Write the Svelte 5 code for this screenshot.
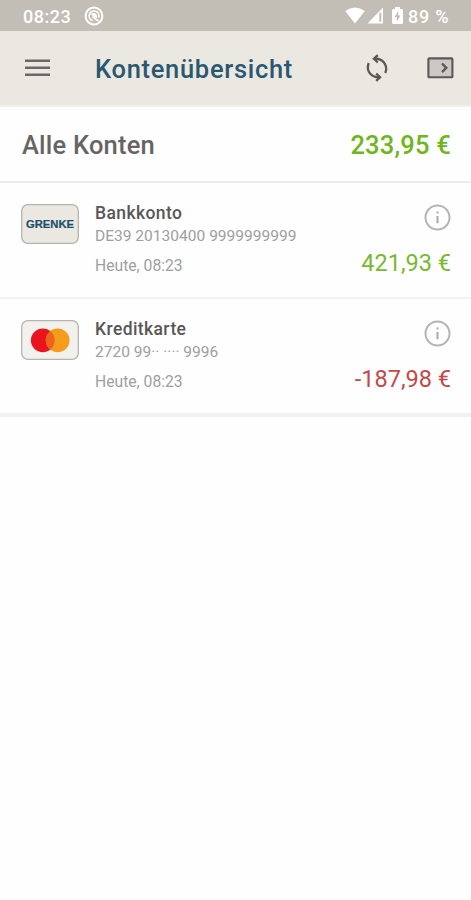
<script>
  const accounts = [
    { kind: 'bank', name: 'Bankkonto', number: 'DE39 20130400 9999999999', updated: 'Heute, 08:23', amount: '421,93 €', negative: false },
    { kind: 'card', name: 'Kreditkarte', number: '2720 99·· ···· 9996', updated: 'Heute, 08:23', amount: '-187,98 €', negative: true }
  ];
</script>

<div class="screen">
  <div class="status">
    <span class="clock">08:23</span>
    <svg class="notif" width="20" height="20" viewBox="0 0 20 20" fill="none" stroke="#fff">
      <circle cx="10" cy="10" r="8.4" stroke-width="2" />
      <path d="M8.500 14.600A4.900 4.900 0 1 1 14.700 11.500" stroke-width="1.700" />
      <path d="M6.800 8.400Q9.500 6 12 8q1.800 1.800 1 4.200z" fill="#fff" stroke="none" />
      <path d="M8.500 10.500l6 4.700" stroke-width="1.700" />
    </svg>
    <span class="grow"></span>
    <svg class="wifi" width="20" height="17" viewBox="0 0 20 17"><path d="M10 16.500L.2 4Q10-3 19.800 4z" fill="#fff" /></svg>
    <svg class="signal" width="17" height="17" viewBox="0 0 17 17">
      <path d="M.5 16.500L16 .5v16z" fill="#fff" />
      <path d="M12.300 6.700l2-2v10h-2z" fill="#c2beb5" />
    </svg>
    <svg class="battery" width="11" height="17" viewBox="0 0 11 17">
      <path d="M3 0h5v2h1.500Q11 2 11 3.500v12Q11 17 9.500 17h-8Q0 17 0 15.500v-12Q0 2 1.500 2H3z" fill="#fff" />
      <path d="M6.300 4L2.600 10h2.200v4.500L8.500 8.500H6.300z" fill="#c2beb5" />
    </svg>
    <span class="percent">89 %</span>
  </div>

  <header>
    <svg class="menu" width="25" height="18" viewBox="0 0 25 18"><path d="M0 1.700h25M0 8.700h25M0 15.700h25" stroke="#6b6865" stroke-width="2.500" /></svg>
    <h1>Kontenübersicht</h1>
    <span class="grow"></span>
    <svg class="sync" width="30" height="30" viewBox="0 0 30 30" fill="none" stroke="#5a5957" stroke-width="2.300">
      <path d="M12.500 5.800C20 5.200 26.500 11.500 23.300 20M6.700 10C3.500 18.500 10 24.800 17.500 24.200" />
      <path d="M15.800 2.200l-3.900 3.600 3.900 3.700M14.200 20.500l3.900 3.700-3.900 3.600" />
    </svg>
    <svg class="panel" width="27" height="22" viewBox="0 0 27 22">
      <rect x="1.400" y="1.400" width="24" height="18.800" rx=".8" fill="#ccc9c5" stroke="#5a5957" stroke-width="2.100" />
      <path d="M15 6.500l4.300 4.300-4.300 4.300" fill="none" stroke="#5a5957" stroke-width="2.400" />
    </svg>
  </header>

  <section class="total">
    <span class="all">Alle Konten</span>
    <span class="sum">233,95 €</span>
  </section>

  {#each accounts as account}
    <section class="account">
      <div class="logo">
        {#if account.kind === 'bank'}
          <svg width="58" height="40" viewBox="0 0 58 40">
            <rect x=".7" y=".7" width="56.600" height="38.600" rx="6" fill="#ebe8e2" stroke="#b5b4b0" stroke-width="1.300" />
            <text x="5" y="24" textLength="48" lengthAdjust="spacingAndGlyphs" class="brand">GRENKE</text>
          </svg>
        {:else}
          <svg width="58" height="40" viewBox="0 0 58 40">
            <rect x=".7" y=".7" width="56.600" height="38.600" rx="6" fill="#f2f1ee" stroke="#b5b4b0" stroke-width="1.300" />
            <circle cx="21.800" cy="20.300" r="11.900" fill="#e9141d" />
            <circle cx="36.700" cy="20.300" r="11.900" fill="#f69c1c" />
            <path d="M29.250 11.020a11.900 11.900 0 0 1 0 18.560a11.900 11.900 0 0 1 0-18.560z" fill="#ed651b" />
          </svg>
        {/if}
      </div>
      <div class="details">
        <div class="name">{account.name}</div>
        <div class="number">{account.number}</div>
        <div class="updated">{account.updated}</div>
      </div>
      <div class="side">
        <svg width="27" height="27" viewBox="0 0 27 27">
          <circle cx="13.500" cy="13.500" r="12" fill="none" stroke="#b5b4b3" stroke-width="2" />
          <path d="M12.500 7.500h2v2h-2zM12.500 12h2v7.300h-2z" fill="#aaa9a8" />
        </svg>
        <div class="amount" class:negative={account.negative}>{account.amount}</div>
      </div>
    </section>
  {/each}
</div>

<style>
  .screen {
    width: 471px;
    height: 900px;
    background: #fefefe;
    font-family: Roboto, "Liberation Sans", sans-serif;
    overflow: hidden;
    white-space: nowrap;
  }
  svg { display: block; flex: none; }
  .grow { flex: 1; }
  .status {
    display: flex;
    box-sizing: border-box;
    height: 31px;
    padding: 6px 22px 0 23px;
    background: #c2beb5;
    color: #fff;
    font-size: 18px;
    font-weight: 500;
    line-height: 21px;
  }
  .clock { width: 48px; letter-spacing: .5px; }
  .notif { margin-left: 13px; }
  .wifi { margin: 1px 2px 0 0; }
  .signal { margin: 1px 8px 0 0; }
  .battery { margin: 1px 5px 0 0; }
  .percent { width: 41px; letter-spacing: .8px; }
  header {
    display: flex;
    align-items: center;
    box-sizing: border-box;
    height: 76px;
    padding: 0 17px 0 25px;
    background: #ebe8e2;
    border-bottom: 2px solid #f3f1ed;
  }
  h1 {
    margin: 2px 0 0 45px;
    color: #2b5871;
    font-size: 25.500px;
    font-weight: 500;
    letter-spacing: .7px;
  }
  .sync { margin-right: 35px; }
  .total {
    display: flex;
    justify-content: space-between;
    align-items: center;
    box-sizing: border-box;
    height: 76px;
    padding: 2px 20px 0 22px;
    border-bottom: 2px solid #ecebea;
    font-size: 25.500px;
    font-weight: 500;
    letter-spacing: .2px;
  }
  .all { color: #666564; }
  .sum { color: #6fb61c; }
  .account {
    display: flex;
    box-sizing: border-box;
    height: 116px;
    padding: 21px 20px 0 21px;
    border-bottom: 2px solid #f2f1f0;
  }
  .account:last-child { height: 118px; border-bottom-width: 4px; }
  .brand { font: 700 10.300px "Liberation Sans", sans-serif; fill: #1b4f6d; stroke: #1b4f6d; stroke-width: .2px; }
  .details { flex: 1; margin: -1px 0 0 16px; }
  .name { color: #585756; font-size: 17.500px; font-weight: 500; line-height: 20px; letter-spacing: .4px; }
  .number { margin-top: 3px; color: #a09f9e; font-size: 15.550px; line-height: 20px; }
  .updated { margin-top: 10px; color: #a09f9e; font-size: 15.700px; line-height: 20px; }
  .side { display: flex; flex-direction: column; align-items: flex-end; }
  .amount { margin-top: 18px; color: #79b930; font-size: 23.500px; line-height: 28px; }
  .negative { color: #c04a4c; }
</style>
